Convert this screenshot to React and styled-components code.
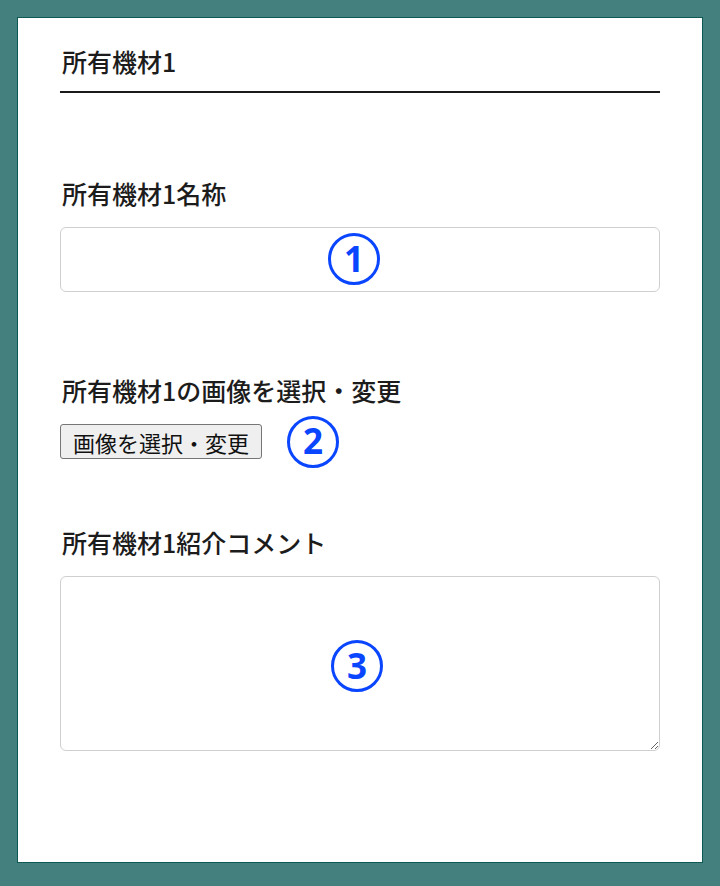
import styled, { createGlobalStyle } from "styled-components";

const GlobalStyle = createGlobalStyle`
  html, body {
    margin: 0;
    padding: 0;
    background: #44807e;
  }
  body {
    font-family: "Noto Sans CJK JP", "Noto Sans", sans-serif;
    color: #1c1c1c;
  }
`;

const Page = styled.div`
  padding: 17px 17px 22px 17px;
`;

const Panel = styled.div`
  background: #ffffff;
  border: 1px solid #0d5955;
  height: 846px;
  box-sizing: border-box;
  padding: 25px 42px 0 42px;
`;

const Heading = styled.h2`
  margin: 0;
  font-size: 25px;
  font-weight: 500;
  line-height: 36px;
  padding: 0 2px 12px;
  border-bottom: 2px solid #1a1a1a;
`;

const Field = styled.div`
  margin-top: ${(p) => p.$gap}px;
`;

const Label = styled.label`
  display: block;
  font-size: 25px;
  font-weight: 500;
  line-height: 36px;
  padding-left: 2px;
  margin-bottom: 16px;
`;

const BoxWrap = styled.div`
  position: relative;
`;

const TextInput = styled.input`
  display: block;
  width: 100%;
  height: 65px;
  box-sizing: border-box;
  border: 1px solid #cfcfcf;
  border-radius: 6px;
  background: #fff;
  font-size: 22px;
  padding: 0 14px;
  outline: none;
`;

const TextArea = styled.textarea`
  display: block;
  width: 100%;
  height: 175px;
  box-sizing: border-box;
  border: 1px solid #cfcfcf;
  border-radius: 6px;
  background: #fff;
  font-size: 22px;
  padding: 10px 14px;
  outline: none;
`;

const ButtonRow = styled.div`
  display: flex;
  align-items: center;
  gap: 25px;
  height: 35px;
`;

const FileButton = styled.button`
  height: 35px;
  width: 202px;
  padding: 0;
  box-sizing: border-box;
  border: 1px solid #767676;
  border-radius: 3px;
  background: #efefef;
  color: #111;
  font-family: "Noto Sans CJK JP", sans-serif;
  font-size: 22px;
  line-height: 1;
`;

const Marker = styled.span`
  display: inline-flex;
  align-items: center;
  justify-content: center;
  width: 52px;
  height: 52px;
  box-sizing: border-box;
  border: 3px solid #0a45ff;
  border-radius: 50%;
  color: #0a45ff;
  font-family: "Noto Sans", sans-serif;
  font-weight: 700;
  font-size: 35px;
  line-height: 1;
  padding-bottom: 2px;
  flex: none;
  pointer-events: none;
  ${(p) =>
    p.$left !== undefined &&
    `
    position: absolute;
    left: ${p.$left}px;
    top: ${p.$top}px;
  `}
`;

export default function App() {
  return (
    <>
      <GlobalStyle />
      <Page>
        <Panel>
          <Heading>所有機材1</Heading>

          <Field $gap={82}>
            <Label>所有機材1名称</Label>
            <BoxWrap>
              <TextInput type="text" />
              <Marker $left={268} $top={6}>1</Marker>
            </BoxWrap>
          </Field>

          <Field $gap={80}>
            <Label>所有機材1の画像を選択・変更</Label>
            <ButtonRow>
              <FileButton type="button">画像を選択・変更</FileButton>
              <Marker>2</Marker>
            </ButtonRow>
          </Field>

          <Field $gap={65}>
            <Label>所有機材1紹介コメント</Label>
            <BoxWrap>
              <TextArea />
              <Marker $left={271} $top={64}>3</Marker>
            </BoxWrap>
          </Field>
        </Panel>
      </Page>
    </>
  );
}
